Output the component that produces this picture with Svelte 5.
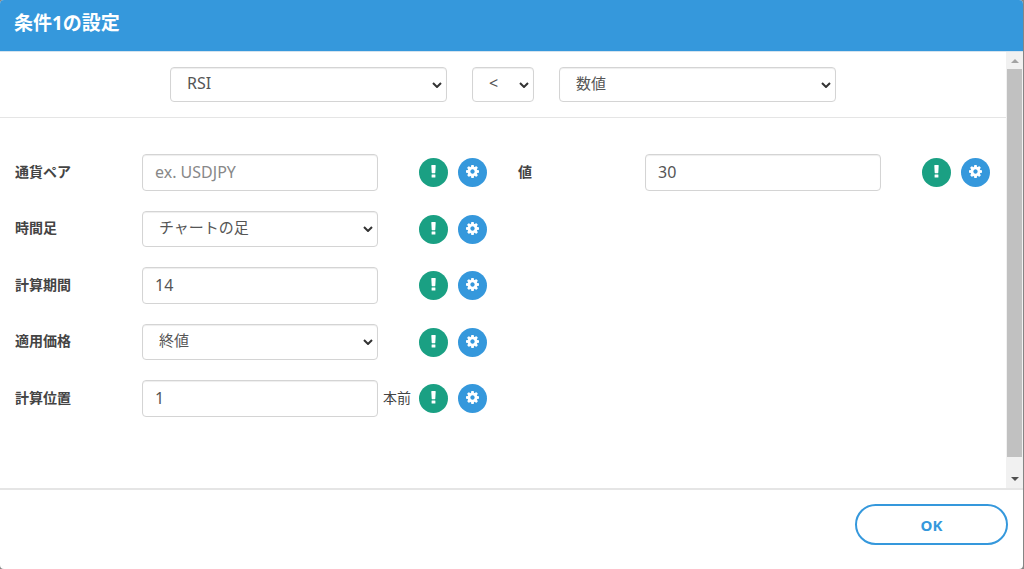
<script>
  let title = "条件1の設定";
  let indicator = "RSI";
  let operator = "<";
  let target = "数値";

  // Parameter rows for each side of the comparison
  let leftFields = [
    { id: "pair", label: "通貨ペア", type: "text", value: "", placeholder: "ex. USDJPY" },
    { id: "timeframe", label: "時間足", type: "select", value: "チャートの足", options: ["チャートの足"] },
    { id: "period", label: "計算期間", type: "text", value: "14" },
    { id: "price", label: "適用価格", type: "select", value: "終値", options: ["終値", "始値", "高値", "安値"] },
    { id: "shift", label: "計算位置", type: "text", value: "1", suffix: "本前" }
  ];
  let rightFields = [
    { id: "value", label: "値", type: "text", value: "30" }
  ];
  let columns = [leftFields, rightFields];
</script>

<div class="backdrop">
  <div class="modal" role="dialog" aria-labelledby="modal-title">
    <header class="modal-header">
      <h1 id="modal-title">{title}</h1>
    </header>

    <div class="modal-body">
      <div class="content">
        <div class="condition">
          <div class="select-wrap wide">
            <select class="latin" aria-label="インジケーター" bind:value={indicator}>
              <option>RSI</option>
            </select>
            <svg class="chevron" viewBox="0 0 10 6"><path d="M1 1l4 4 4-4" /></svg>
          </div>
          <div class="select-wrap narrow">
            <select class="latin" aria-label="比較" bind:value={operator}>
              <option value="<">&lt;</option>
              <option value=">">&gt;</option>
            </select>
            <svg class="chevron" viewBox="0 0 10 6"><path d="M1 1l4 4 4-4" /></svg>
          </div>
          <div class="select-wrap wide">
            <select aria-label="比較対象" bind:value={target}>
              <option>数値</option>
            </select>
            <svg class="chevron" viewBox="0 0 10 6"><path d="M1 1l4 4 4-4" /></svg>
          </div>
        </div>

        <div class="columns">
          {#each columns as fields}
            <div class="column">
              {#each fields as field (field.id)}
                <div class="row">
                  <label for={field.id}>{field.label}</label>
                  {#if field.type === "select"}
                    <div class="select-wrap field">
                      <select id={field.id} bind:value={field.value}>
                        {#each field.options as option}
                          <option>{option}</option>
                        {/each}
                      </select>
                      <svg class="chevron" viewBox="0 0 10 6"><path d="M1 1l4 4 4-4" /></svg>
                    </div>
                  {:else}
                    <input
                      class="field"
                      id={field.id}
                      type="text"
                      placeholder={field.placeholder}
                      bind:value={field.value}
                    />
                  {/if}
                  <span class="suffix">{field.suffix ?? ""}</span>
                  <div class="actions">
                    <button class="round info" type="button" aria-label="説明">
                      <svg viewBox="0 0 13 13">
                        <path d="M4.700 0h3.600q.4 0 .4.4l-.4 7.400q0 .4-.4.4H5.100q-.4 0-.4-.4L4.300.4q0-.4.4-.4zM5 9.400h3q.4 0 .4.4v2.400q0 .4-.4.4H5q-.4 0-.4-.4V9.800q0-.4.4-.4z" />
                      </svg>
                    </button>
                    <button class="round config" type="button" aria-label="設定">
                      <svg viewBox="0 128 1536 1536">
                        <path d="M1024 896q0-106-75-181t-181-75-181 75-75 181 75 181 181 75 181-75 75-181zm512-109v222q0 12-8 23t-20 13l-185 28q-19 54-39 91 35 50 107 138 10 12 10 25t-9 23q-27 37-99 108t-94 71q-12 0-26-9l-138-108q-44 23-91 38-16 136-29 186-7 28-36 28h-222q-14 0-24.500-8.500t-11.500-21.500l-28-184q-49-16-90-37l-141 107q-10 9-25 9-14 0-25-11-126-114-165-168-7-10-7-23 0-12 8-23 15-21 51-66.500t54-70.500q-27-50-41-99l-183-27q-13-2-21-12.500t-8-23.500v-222q0-12 8-23t19-13l186-28q14-46 39-92-40-57-107-138-10-12-10-24 0-10 9-23 26-36 98.500-107.500t94.500-71.500q13 0 26 10l138 107q44-23 91-38 16-136 29-186 7-28 36-28h222q14 0 24.500 8.500t11.500 21.500l28 184q49 16 90 37l142-107q9-9 24-9 13 0 25 10 129 119 165 170 7 8 7 22 0 12-8 23-15 21-51 66.500t-54 70.500q26 50 41 98l183 28q13 2 21 12.500t8 23.500z" />
                      </svg>
                    </button>
                  </div>
                </div>
              {/each}
            </div>
          {/each}
        </div>
      </div>

      <div class="scrollbar" aria-hidden="true">
        <svg class="arrow up" viewBox="0 0 8 4"><path d="M0 4l4-4 4 4z" /></svg>
        <div class="track"><div class="thumb"></div></div>
        <svg class="arrow down" viewBox="0 0 8 4"><path d="M0 0l4 4 4-4z" /></svg>
      </div>
    </div>

    <footer class="modal-footer">
      <button class="ok" type="button">OK</button>
    </footer>
  </div>
</div>

<style>
  :global(body) {
    margin: 0;
  }

  .backdrop {
    box-sizing: border-box;
    min-height: 100vh;
    padding-right: 1px;
    display: flex;
    background: #858585;
    color: #444;
    font-family: "Noto Sans", "Noto Sans CJK JP", sans-serif;
    font-size: 15px;
    line-height: 20px;
  }

  .modal {
    flex: 1;
    min-width: 0;
    display: flex;
    flex-direction: column;
    background: #fff;
    border-radius: 4px;
    overflow: hidden;
  }

  .modal-header {
    padding: 11px 14px 16px;
    background: #3598dc;
    border-bottom: 1px solid #d5e3ee;
    color: #fff;
  }

  h1 {
    margin: 0;
    font-size: 19px;
    line-height: 24px;
    font-weight: 700;
  }

  .modal-body {
    flex: 1;
    display: flex;
  }

  .content {
    flex: 1;
    min-width: 0;
  }

  .condition {
    display: flex;
    justify-content: center;
    gap: 25px;
    padding: 15px;
    border-bottom: 1px solid #e5e5e5;
  }

  .wide {
    width: 277px;
  }

  .narrow {
    width: 62px;
  }

  .columns {
    display: grid;
    grid-template-columns: repeat(2, minmax(0, 1fr));
    padding: 36px 0;
  }

  .column {
    display: flex;
    flex-direction: column;
    gap: 20px;
    padding: 0 16px 0 15px;
  }

  .row {
    display: flex;
    align-items: center;
  }

  label {
    width: 127px;
    padding-bottom: 2px;
    font-size: 14px;
    font-weight: 700;
  }

  .field {
    flex: 1;
    min-width: 0;
  }

  input,
  select {
    box-sizing: border-box;
    border: 1px solid #d4d4d4;
    border-radius: 4px;
    background: #fff;
    color: #555;
    font: inherit;
  }

  input {
    height: 37px;
    padding: 0 12px 2px;
    font-size: 16px;
    box-shadow: inset 0 1px 1px rgba(0, 0, 0, 0.07);
  }

  input::placeholder {
    color: #888;
    opacity: 1;
  }

  .select-wrap {
    position: relative;
    display: flex;
  }

  select {
    appearance: none;
    width: 100%;
    height: 36px;
    padding: 0 16px 4px;
    box-shadow: inset 0 1px 1px rgba(0, 0, 0, 0.07);
  }

  .latin {
    font-size: 16px;
  }

  .condition select {
    height: 35px;
  }

  .chevron {
    position: absolute;
    right: 5px;
    top: 15px;
    width: 10px;
    height: 6px;
    fill: none;
    stroke: #333;
    stroke-width: 2;
    pointer-events: none;
  }

  .suffix {
    width: 36px;
    padding: 0 0 2px 5px;
    font-size: 14px;
    white-space: nowrap;
  }

  .actions {
    display: flex;
    gap: 10px;
  }

  .round {
    display: flex;
    align-items: center;
    justify-content: center;
    width: 29px;
    height: 29px;
    padding: 0 0 2px;
    border: 0;
    border-radius: 50%;
    cursor: pointer;
  }

  .round svg {
    width: 13px;
    height: 13px;
    fill: #fff;
  }

  .info {
    background: #1aa083;
  }

  .config {
    background: #3598dc;
  }

  .scrollbar {
    box-sizing: border-box;
    flex-shrink: 0;
    display: flex;
    flex-direction: column;
    align-items: center;
    width: 17px;
    padding: 7px 1px;
    background: #f1f1f1;
  }

  .track {
    flex: 1;
    align-self: stretch;
    display: flex;
    flex-direction: column;
    padding: 6px 0 20px;
  }

  .thumb {
    flex: 1;
    background: #c1c1c1;
  }

  .arrow {
    width: 8px;
    height: 4px;
  }

  .up {
    fill: #a3a3a3;
  }

  .down {
    fill: #505050;
  }

  .modal-footer {
    display: flex;
    justify-content: flex-end;
    padding: 14px 15px 24px;
    border-top: 2px solid #e5e5e5;
  }

  .ok {
    width: 153px;
    height: 41px;
    padding: 0;
    border: 2px solid #3598dc;
    border-radius: 21px;
    background: #fff;
    color: #3598dc;
    font: inherit;
    font-size: 15px;
    font-weight: 700;
    cursor: pointer;
  }
</style>
